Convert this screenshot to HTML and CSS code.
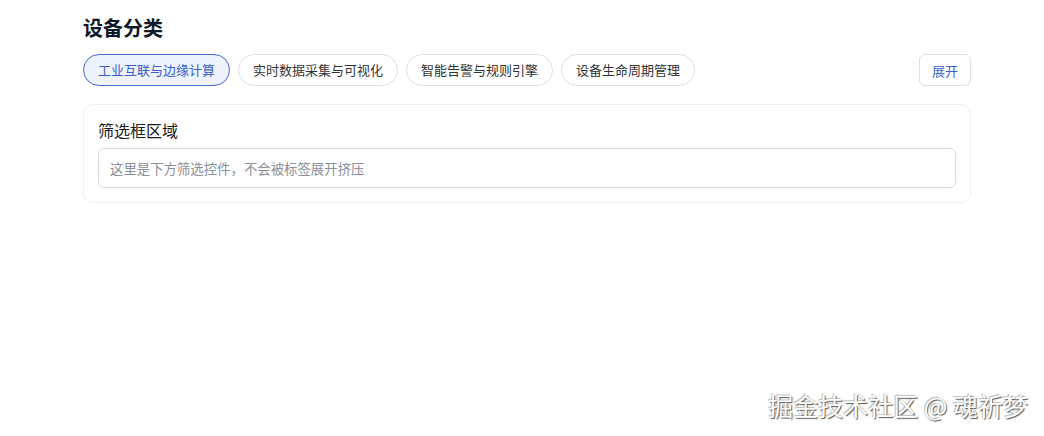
FILE: index.html
```html
<!DOCTYPE html>
<html lang="zh-CN">
<head>
<meta charset="UTF-8">
<meta name="viewport" content="width=device-width, initial-scale=1.0">
<title>设备分类</title>
<link rel="stylesheet" href="styles.css">
</head>
<body>
  <div id="container">
    <h2 class="title">设备分类</h2>
    <div class="tag-bar">
      <div class="tags">
        <span class="tag active">工业互联与边缘计算</span>
        <span class="tag">实时数据采集与可视化</span>
        <span class="tag">智能告警与规则引擎</span>
        <span class="tag">设备生命周期管理</span>
      </div>
      <button class="toggle">展开</button>
    </div>
    <div class="filter-card">
      <div class="filter-label">筛选框区域</div>
      <input class="filter-input" type="text" placeholder="这里是下方筛选控件，不会被标签展开挤压">
    </div>
  </div>
  <div class="watermark">掘金技术社区 @ 魂祈梦</div>
</body>
</html>
```

FILE: styles.css
```css
body {
  margin: 0;
  padding: 0;
  background-color: #fff;
  font-family: "Noto Sans CJK SC", "Noto Sans", sans-serif;
  color: #1f2329;
}
#container {
  width: 888px;
  margin-left: 83px;
  padding-top: 14px;
}
.title {
  font-size: 20px;
  font-weight: bold;
  line-height: 28px;
  margin: 0 0 12px;
  color: #111827;
}
.tag-bar {
  display: flex;
  align-items: flex-start;
  justify-content: space-between;
}
.tags {
  display: flex;
  gap: 8px;
}
.tag {
  height: 30px;
  line-height: 30px;
  padding: 0 14px;
  font-size: 13px;
  color: #333;
  border: 1px solid #dcdfe6;
  border-radius: 16px;
  background: #fff;
}
.tag.active {
  color: #3a5fc8;
  background: #eef3fd;
  border-color: #4a6bc9;
}
.toggle {
  height: 32px;
  padding: 0 12px;
  font-family: inherit;
  font-size: 13px;
  color: #3a5fc8;
  background: #fff;
  border: 1px solid #dcdfe6;
  border-radius: 6px;
}
.filter-card {
  margin-top: 18px;
  padding: 15px 14px 14px;
  border: 1px solid #eeeff2;
  border-radius: 10px;
}
.filter-label {
  font-size: 16px;
  font-weight: normal;
  line-height: 20px;
  color: #1a1a1a;
  margin-bottom: 8px;
}
.filter-input {
  display: block;
  box-sizing: border-box;
  width: 100%;
  height: 40px;
  padding: 0 11px;
  font-family: inherit;
  font-size: 13.4px;
  border: 1px solid #d9dce2;
  border-radius: 6px;
  outline: none;
}
.filter-input::placeholder {
  color: #8a8f99;
}
.watermark {
  position: absolute;
  right: 16px;
  bottom: 13px;
  font-size: 25px;
  color: #fff;
  text-shadow: 1px 1px 1px #555, -1px -1px 1px #bbb;
}
```
